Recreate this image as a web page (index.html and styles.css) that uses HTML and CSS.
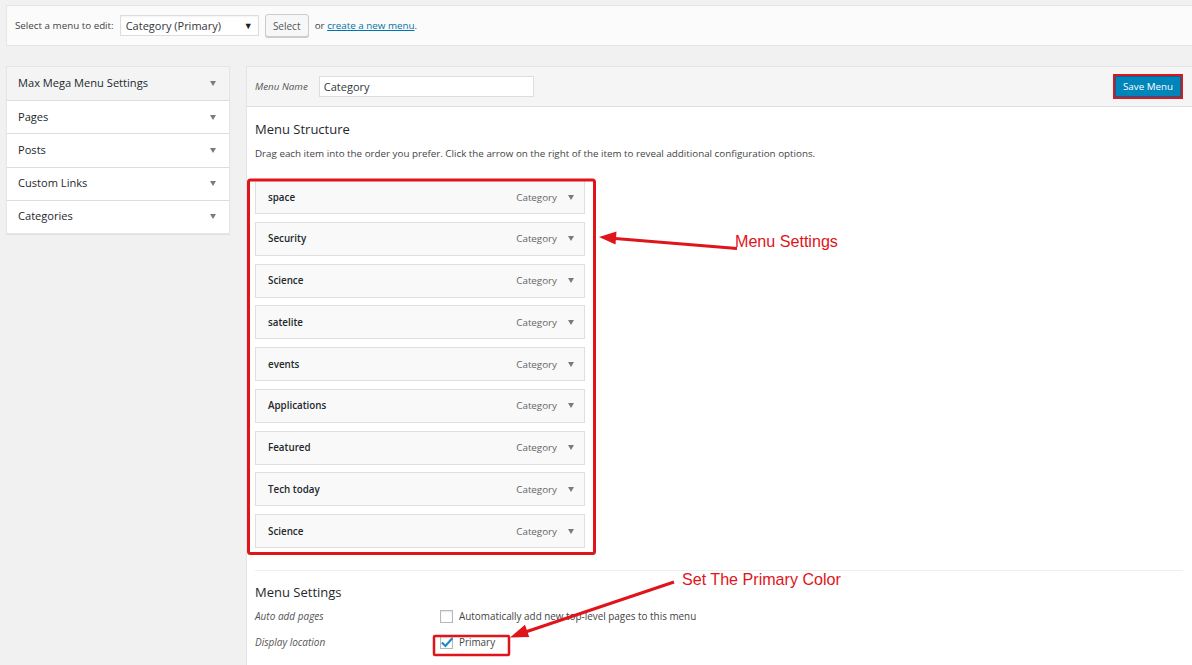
FILE: index.html
```html
<!DOCTYPE html>
<html>
<head>
<meta charset="utf-8">
<link rel="stylesheet" href="styles.css">
</head>
<body>
<div class="page">
  <div class="topbar">
    <span class="top-label">Select a menu to edit:</span>
    <div class="fake-select"><span>Category (Primary)</span><span class="sel-arrow">▼</span></div>
    <button class="btn-select">Select</button>
    <span class="or-text">or <a class="link" href="#">create a new menu</a>.</span>
  </div>

  <div class="columns">
    <div class="sidebar">
      <div class="acc-row acc-first"><span>Max Mega Menu Settings</span><i class="tri"></i></div>
      <div class="acc-row"><span>Pages</span><i class="tri"></i></div>
      <div class="acc-row"><span>Posts</span><i class="tri"></i></div>
      <div class="acc-row"><span>Custom Links</span><i class="tri"></i></div>
      <div class="acc-row acc-last"><span>Categories</span><i class="tri"></i></div>
    </div>

    <div class="main">
      <div class="main-head">
        <span class="name-label">Menu Name</span>
        <div class="name-input">Category</div>
        <div class="spacer"></div>
        <button class="btn-save">Save Menu</button>
      </div>
      <div class="main-body">
        <h3 class="sec-title">Menu Structure</h3>
        <p class="desc">Drag each item into the order you prefer. Click the arrow on the right of the item to reveal additional configuration options.</p>
        <ul class="items">
          <li class="item"><span class="item-title">space</span><span class="item-type">Category</span><i class="tri"></i></li>
          <li class="item"><span class="item-title">Security</span><span class="item-type">Category</span><i class="tri"></i></li>
          <li class="item"><span class="item-title">Science</span><span class="item-type">Category</span><i class="tri"></i></li>
          <li class="item"><span class="item-title">satelite</span><span class="item-type">Category</span><i class="tri"></i></li>
          <li class="item"><span class="item-title">events</span><span class="item-type">Category</span><i class="tri"></i></li>
          <li class="item"><span class="item-title">Applications</span><span class="item-type">Category</span><i class="tri"></i></li>
          <li class="item"><span class="item-title">Featured</span><span class="item-type">Category</span><i class="tri"></i></li>
          <li class="item"><span class="item-title">Tech today</span><span class="item-type">Category</span><i class="tri"></i></li>
          <li class="item"><span class="item-title">Science</span><span class="item-type">Category</span><i class="tri"></i></li>
        </ul>
        <div class="settings">
          <h3 class="sec-title">Menu Settings</h3>
          <div class="set-row">
            <span class="set-label">Auto add pages</span>
            <span class="cbox"></span>
            <span class="set-text">Automatically add new top-level pages to this menu</span>
          </div>
          <div class="set-row">
            <span class="set-label">Display location</span>
            <span class="cbox"><svg viewBox="0 0 14 14" width="14" height="14"><path d="M2.6 7.2 L5.4 10 L11.6 3" fill="none" stroke="#1e8cbe" stroke-width="2.1" stroke-linecap="square"/></svg></span>
            <span class="set-text">Primary</span>
          </div>
        </div>
      </div>
    </div>
  </div>

  <svg class="annot" width="1192" height="665" viewBox="0 0 1192 665">
    <rect x="248.5" y="175" width="346" height="373.5" rx="2" fill="none" stroke="#e0141b" stroke-width="3"/>
    <rect x="434" y="631" width="75" height="19" rx="1" fill="none" stroke="#e0141b" stroke-width="2.5"/>
    <line x1="737" y1="243.5" x2="612" y2="233.3" stroke="#e0141b" stroke-width="3"/>
    <polygon points="599,232 616.5,226.5 615.5,239.5" fill="#e0141b"/>
    <line x1="674" y1="577" x2="524" y2="627.5" stroke="#e0141b" stroke-width="3"/>
    <polygon points="510,632.5 525,619.8 529.2,632" fill="#e0141b"/>
    <text x="735" y="247" class="annot-text" dy="-5">Menu Settings</text>
    <text x="682" y="585" class="annot-text" dy="-5">Set The Primary Color</text>
  </svg>
</div>
</body>
</html>
```

FILE: styles.css
```css
html, body {
  margin: 0;
  padding: 0;
  background: #f1f1f1;
}
body {
  font-family: "Open Sans", "Noto Sans", sans-serif;
  color: #23282d;
  width: 1192px;
  height: 665px;
  overflow: hidden;
}
.page {
  position: relative;
  width: 1192px;
  height: 665px;
}

/* top bar */
.topbar {
  margin: 5px -2px 0 6px;
  height: 41px;
  box-sizing: border-box;
  background: #fbfbfb;
  border: 1px solid #e5e5e5;
  display: flex;
  align-items: center;
  padding-left: 8px;
  font-size: 9.8px;
}
.top-label {
  color: #444;
  margin-right: 6px;
}
.fake-select {
  width: 139px;
  height: 21px;
  box-sizing: border-box;
  border: 1px solid #ddd;
  background: #fff;
  display: flex;
  align-items: center;
  justify-content: space-between;
  padding: 0 5px 0 5px;
  font-size: 11px;
  color: #32373c;
  box-shadow: inset 0 1px 2px rgba(0,0,0,.05);
}
.sel-arrow {
  font-size: 9px;
  color: #222;
}
.btn-select {
  margin-left: 6px;
  width: 44px;
  height: 23px;
  box-sizing: border-box;
  border: 1px solid #ccc;
  border-radius: 3px;
  background: #f7f7f7;
  box-shadow: 0 1px 0 #ccc;
  font-family: inherit;
  font-size: 10px;
  color: #555;
  padding: 0;
}
.or-text {
  margin-left: 6px;
  color: #444;
}
.link {
  color: #0073aa;
  text-decoration: underline;
}

/* columns */
.columns {
  display: flex;
  gap: 16px;
  margin: 20px 0 0 6px;
  align-items: flex-start;
}
.sidebar {
  width: 224px;
  background: #fff;
  border: 1px solid #e5e5e5;
  box-sizing: border-box;
  box-shadow: 0 1px 1px rgba(0,0,0,.06);
}
.acc-row {
  height: 33.2px;
  box-sizing: border-box;
  border-top: 1px solid #ddd;
  display: flex;
  align-items: center;
  justify-content: space-between;
  padding: 0 13px 2px 11px;
  font-size: 11.1px;
  color: #23282d;
  background: #fff;
}
.acc-row .tri {
  margin-top: 2px;
}
.acc-first {
  border-top: none;
  background: #f4f4f4;
}
.tri {
  display: block;
  width: 0;
  height: 0;
  border-left: 3.5px solid transparent;
  border-right: 3.5px solid transparent;
  border-top: 5px solid #787c82;
}

/* main */
.main {
  flex: 1;
  background: #fff;
  border: 1px solid #e5e5e5;
  border-right: none;
  border-bottom: none;
  height: 620px;
}
.main-head {
  height: 40px;
  box-sizing: border-box;
  background: #f5f5f5;
  border-bottom: 1px solid #dedede;
  display: flex;
  align-items: center;
  padding: 0 9px 0 8px;
}
.name-label {
  font-style: italic;
  font-size: 9.8px;
  color: #555;
  margin-right: 11px;
}
.name-input {
  width: 215px;
  height: 21px;
  box-sizing: border-box;
  border: 1px solid #ddd;
  background: #fff;
  font-size: 11px;
  color: #32373c;
  padding: 0 4px;
  display: flex;
  align-items: center;
}
.spacer {
  flex: 1;
}
.btn-save {
  width: 70px;
  height: 25px;
  box-sizing: border-box;
  border: 2px solid #e0141b;
  background: #0085ba;
  color: #fff;
  font-family: inherit;
  font-size: 9.8px;
  padding: 0;
  box-shadow: inset 0 0 0 1px #006799;
}
.main-body {
  padding: 13px 9px 0 8px;
}
.sec-title {
  margin: 0;
  font-size: 13px;
  line-height: 18px;
  font-weight: 400;
  color: #23282d;
}
.desc {
  margin: 8px 0 0;
  font-size: 9.8px;
  line-height: 15px;
  color: #444;
}
.items {
  list-style: none;
  margin: 19px 0 0;
  padding: 0;
  width: 330px;
}
.item {
  height: 34px;
  box-sizing: border-box;
  border: 1px solid #dfdfdf;
  background: #f9f9f9;
  margin-bottom: 7.75px;
  display: flex;
  align-items: center;
  padding: 0 10px 0 12px;
}
.item-title {
  flex: 1;
  font-size: 9.8px;
  font-weight: 600;
  color: #23282d;
}
.item-type {
  font-size: 9.8px;
  color: #666;
  margin-right: 11px;
}
.settings {
  margin-top: 22px;
  border-top: 1px solid #eee;
  padding-top: 12px;
}
.set-row {
  display: flex;
  align-items: center;
  height: 20px;
  margin-top: 5px;
}
.set-row + .set-row {
  margin-top: 6px;
}
.set-label {
  width: 185px;
  font-style: italic;
  font-size: 10px;
  color: #555;
}
.cbox {
  width: 13px;
  height: 13px;
  box-sizing: border-box;
  border: 1px solid #b4b9be;
  background: #fff;
  position: relative;
  box-shadow: inset 0 1px 2px rgba(0,0,0,.1);
}
.cbox svg {
  position: absolute;
  left: -1px;
  top: -1px;
}
.set-text {
  margin-left: 6px;
  font-size: 9.9px;
  color: #444;
}

/* annotations */
.annot {
  position: absolute;
  left: 0;
  top: 0;
  pointer-events: none;
}
.annot-text {
  font-family: "Liberation Sans", Arial, sans-serif;
  font-size: 16.1px;
  fill: #e0141b;
}
```
